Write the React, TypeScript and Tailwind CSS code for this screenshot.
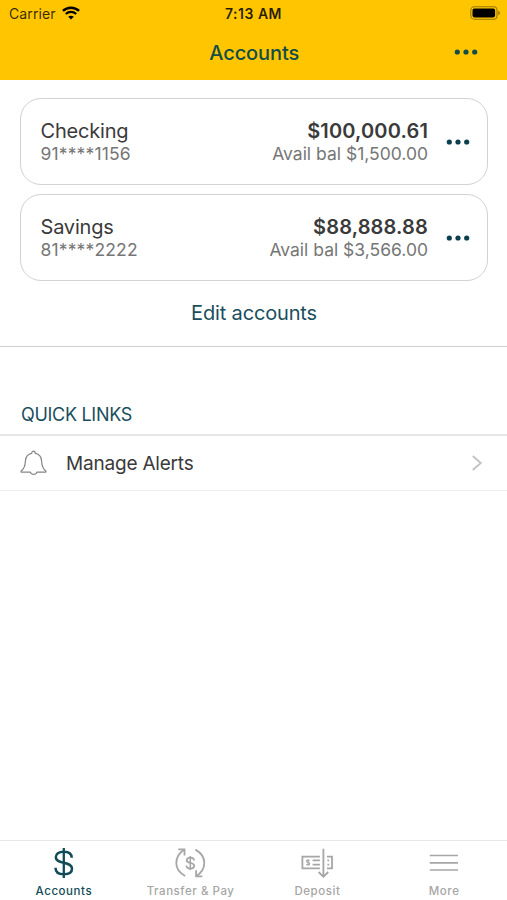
import React from "react";

const accounts = [
  {
    name: "Checking",
    number: "91****1156",
    balance: "$100,000.61",
    available: "Avail bal $1,500.00",
  },
  {
    name: "Savings",
    number: "81****2222",
    balance: "$88,888.88",
    available: "Avail bal $3,566.00",
  },
];

const Dots = () => (
  <svg width="24" height="6" viewBox="0 0 24 6" fill="currentColor">
    <circle cx="3.3" cy="3" r="2.6" />
    <circle cx="12" cy="3" r="2.6" />
    <circle cx="20.7" cy="3" r="2.6" />
  </svg>
);

const WifiIcon = () => (
  <svg width="18" height="14" viewBox="0 0 18 14" fill="none" stroke="currentColor">
    <path d="M0.9 4.9 C5.4 0.6 12.6 0.6 17.1 4.9" strokeWidth="2.5" />
    <path d="M3.8 8 C6.8 5.2 11.2 5.2 14.2 8" strokeWidth="2.3" />
    <path d="M9 13.6 L6.2 10.8 C7.8 9.3 10.2 9.3 11.8 10.8 Z" fill="currentColor" stroke="none" />
  </svg>
);

const BatteryIcon = () => (
  <svg width="31" height="14" viewBox="0 0 31 14" fill="none">
    <rect x="0.8" y="0.8" width="26.2" height="12.4" rx="3.4" stroke="#000" strokeOpacity="0.4" strokeWidth="1.1" />
    <rect x="2.5" y="2.6" width="22.6" height="8.8" rx="1.8" fill="#000" />
    <path d="M28.3 4.8 C30.4 5.6 30.4 8.4 28.3 9.2 Z" fill="#000" fillOpacity="0.45" />
  </svg>
);

const BellIcon = () => (
  <svg width="28" height="26" viewBox="0 0 28 26" fill="none" stroke="#858585" strokeWidth="1.2" strokeLinejoin="round">
    <path d="M11.7 3.4 C11.7 0.4 15.3 0.4 15.3 3.4 C19.4 4.2 21.4 7 21.6 11 C21.8 16 22.6 18.8 25.9 21 V22.1 H16.8 C15.9 25.2 11.3 25.2 10.4 22.1 H1.1 V21 C4.4 18.8 5.2 16 5.4 11 C5.6 7 7.6 4.2 11.7 3.4 Z" />
  </svg>
);

const DollarIcon = () => (
  <svg width="32" height="32" viewBox="-0.8 0 32 32" fill="none" stroke="currentColor" strokeWidth="2.5">
    <path d="M16 1 V31" strokeWidth="2.3" />
    <path d="M23.9 10.8 C23.9 6.6 20.9 4.7 16 4.7 C10.8 4.7 8 7 8 10.2 C8 13.7 11.2 14.7 16 15.7 C21.2 16.8 24.2 18 24.2 21.8 C24.2 25.3 21.3 27.3 16 27.3 C10.8 27.3 7.7 25 7.7 20.7" />
  </svg>
);

const TransferIcon = () => (
  <svg width="32" height="32" viewBox="-0.3 0 32 32" fill="none" stroke="currentColor" strokeWidth="1.8">
    <path d="M10.9 29 C4.8 25.6 2 21.2 2 16 C2 10.8 5 6 10 2.6" />
    <path d="M4 2.4 H10.2 V8.6" />
    <path d="M21.1 2.6 C27.2 6 30 10.4 30 16 C30 21.2 27 25.8 22 29.2" />
    <path d="M28 29.4 H21.8 V23.2" />
    <path d="M16 9 V23.2" strokeWidth="1.5" />
    <path d="M19.7 13.5 C19.7 11.5 18.2 10.7 16 10.7 C13.8 10.7 12.4 11.8 12.4 13.2 C12.4 15 14 15.4 16 15.9 C18.2 16.4 19.9 17 19.9 18.8 C19.9 20.5 18.4 21.5 16 21.5 C13.7 21.5 12.2 20.5 12.2 18.5" />
  </svg>
);

const DepositIcon = () => (
  <svg width="32" height="32" viewBox="0 0 32 32" fill="none" stroke="currentColor" strokeWidth="1.8">
    <path d="M18.9 9.6 H1.4 V21.4 H18.9" />
    <path d="M26 9.6 H31 V21.4 H26" />
    <path d="M22.4 1.8 V29.4 M17.6 25 L22.4 29.8 L27.2 25" />
    <path d="M11.6 13.4 H18.9 M11.6 17.6 H18.9" />
    <path d="M8.6 13.7 C7.6 12.8 5.5 12.9 5.5 14.2 C5.5 15.7 8.7 15 8.7 16.7 C8.7 18.1 6.3 18.2 5.3 17.3 M7.1 12.2 V18.8" strokeWidth="1.1" />
    <path d="M26.4 13.4 H28.2 M26.4 17.6 H28.2" />
  </svg>
);

const MenuIcon = () => (
  <svg width="32" height="32" viewBox="0 0 32 32" fill="none" stroke="currentColor" strokeWidth="1.7">
    <path d="M1.8 8.5 H30 M1.8 15.8 H30 M1.8 23 H30" />
  </svg>
);

const tabs = [
  { label: "Accounts", icon: <DollarIcon />, color: "text-[#124b58]" },
  { label: "Transfer & Pay", icon: <TransferIcon />, color: "text-[#a6a6a6]" },
  { label: "Deposit", icon: <DepositIcon />, color: "text-[#a6a6a6]" },
  { label: "More", icon: <MenuIcon />, color: "text-[#a6a6a6]" },
];

const App = () => {
  return (
    <div className="flex h-[900px] w-full flex-col overflow-hidden bg-white font-['Inter',sans-serif] text-[#3a3a3a]">
      <header className="h-20 shrink-0 bg-[#ffc600]">
        {/* Status bar */}
        <div className="grid h-7 grid-cols-3 items-center pr-1.5 pl-[9px] text-sm leading-7 text-black">
          <div className="flex items-center gap-1.5 text-black/80">
            <span className="tracking-[0.1px]">Carrier</span>
            <span className="-mt-0.5 text-black">
              <WifiIcon />
            </span>
          </div>
          <span className="pr-[3px] text-center text-[14px] font-semibold tracking-[0.5px] whitespace-nowrap text-black/85">
            7:13 AM
          </span>
          <div className="-mt-0.5 flex justify-end">
            <BatteryIcon />
          </div>
        </div>

        <div className="grid h-12 grid-cols-3 items-center pr-[29.5px] text-[#124d48]">
          <span />
          <h1 className="pt-px pl-[31px] text-center text-[20px] font-medium tracking-[-0.1px]">Accounts</h1>
          <div className="flex justify-end">
            <Dots />
          </div>
        </div>
      </header>

      <main className="flex-1">
        <section className="flex flex-col gap-[9px] border-b border-[#cfcfcf] pt-[18px] pr-[19px] pl-5">
          {accounts.map((account) => (
            <div
              key={account.name}
              className="flex h-[87px] items-center rounded-[21px] border border-[#d2d2d2] pr-[17px] pl-[19.5px]"
            >
              <div className="flex-1 pt-px">
                <p className="text-[20px] leading-6 tracking-[-0.2px]">{account.name}</p>
                <p className="text-[17.5px] leading-[22px] tracking-[0.15px] text-[#767676]">{account.number}</p>
              </div>
              <div className="mr-[18px] pt-px text-right">
                <p className="text-[20px] leading-6 font-semibold tracking-[0.15px]">{account.balance}</p>
                <p className="text-[17.5px] leading-[22px] text-[#767676]">{account.available}</p>
              </div>
              <span className="text-[#0b3f4e]">
                <Dots />
              </span>
            </div>
          ))}
          <button className="h-14 pb-[11px] text-[20px] tracking-[-0.15px] text-[#1a4e5c]">Edit accounts</button>
        </section>

        <section>
          <h2 className="flex h-[89px] items-end border-b-2 border-[#e6e6e6] px-[21px] pb-[7px] text-[18px] leading-6 tracking-[-0.3px] text-[#1a4e5c]">
            QUICK LINKS
          </h2>
          <div className="flex h-[55px] items-center border-b border-[#ececec] pr-[24px] pl-5">
            <BellIcon />
            <span className="ml-[18px] flex-1 pt-0.5 text-[19px] tracking-[-0.2px]">Manage Alerts</span>
            <svg width="12" height="18" viewBox="0 0 12 18" fill="none" stroke="#c2c2c2" strokeWidth="1.8">
              <path d="M1.8 2 L9.8 9 L1.8 16" />
            </svg>
          </div>
        </section>
      </main>

      <nav className="grid h-[60px] shrink-0 grid-cols-4 border-t border-[#e8e8e8]">
        {tabs.map((tab) => (
          <div key={tab.label} className={`flex flex-col items-center pt-1.5 ${tab.color}`}>
            {tab.icon}
            <span className="mt-1 pl-px text-[11.5px] leading-4 font-medium tracking-[0.55px] whitespace-nowrap">
              {tab.label}
            </span>
          </div>
        ))}
      </nav>
    </div>
  );
};

export default App;
